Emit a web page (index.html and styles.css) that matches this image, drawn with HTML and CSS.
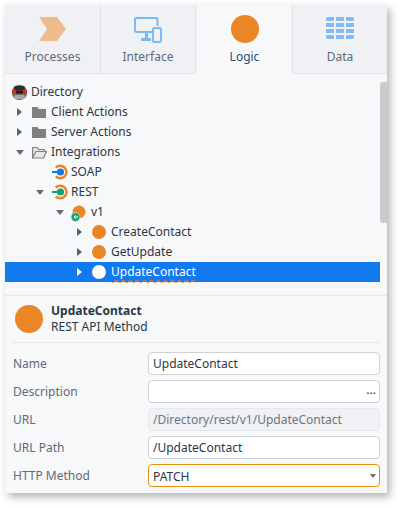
FILE: index.html
```html
<!DOCTYPE html>
<html lang="en">
<head>
<meta charset="utf-8">
<title>Logic</title>
<link rel="stylesheet" href="styles.css">
</head>
<body>
<main class="panel">
  <nav class="tabs">
    <div class="tab">
      <div class="tab-art"><svg class="tab-icon" width="28" height="24" viewBox="0 0 28 24"><path d="M0 0H18L27 12L18 24H0L8 12Z" fill="#eebc8b"/></svg></div>
      <span>Processes</span>
    </div>
    <div class="tab">
      <div class="tab-art"><svg class="tab-icon" width="28" height="26" viewBox="0 0 28 26"><g fill="none" stroke="#7db7f4" stroke-width="2"><path d="M18 15H2.500Q1 15 1 13.500V2.500Q1 1 2.500 1H22Q23.500 1 23.500 2.500V9"/><rect x="19" y="11" width="8" height="14" rx="1.500"/></g><path d="M11 15H14V21H11ZM7 21H17V24H7Z" fill="#7db7f4"/></svg></div>
      <span>Interface</span>
    </div>
    <div class="tab tab-active">
      <div class="tab-art"><span class="dot dot-large"></span></div>
      <span>Logic</span>
    </div>
    <div class="tab tab-last">
      <div class="tab-art"><svg class="tab-icon" width="28" height="22" viewBox="0 0 28 22"><path d="M2 0H8V4H0V2Q0 0 2 0ZM10 0H18V4H10ZM20 0H26Q28 0 28 2V4H20ZM0 6H8V10H0ZM10 6H18V10H10ZM20 6H28V10H20ZM0 12H8V16H0ZM10 12H18V16H10ZM20 12H28V16H20ZM0 18H8V22H2Q0 22 0 20ZM10 18H18V22H10ZM20 18H28V20Q28 22 26 22H20Z" fill="#85bbf2"/></svg></div>
      <span>Data</span>
    </div>
  </nav>

  <section class="tree-area">
    <ul class="tree">
      <li class="row">
        <span class="node"><svg width="17" height="17" viewBox="0 0 17 17"><rect x="1" y="1" width="15" height="15" rx="7" fill="#6a6a6a"/><rect x="3" y="2" width="11" height="4" rx="2" fill="#2e2e2e"/><rect x="1" y="6" width="15" height="4" fill="#c8321e"/><rect x="5" y="6.500" width="7" height="3" fill="#1c1c1c"/><rect x="3" y="11" width="11" height="4" rx="2" fill="#a9a9a9"/></svg></span>
        <span class="label">Directory</span>
      </li>
      <li class="row">
        <span class="twist closed"></span>
        <span class="node node-inset"><svg width="15" height="13" viewBox="0 0 15 13"><path d="M0 1H5.500L7 3H14V12H0Z" fill="#808080"/></svg></span>
        <span class="label">Client Actions</span>
      </li>
      <li class="row">
        <span class="twist closed"></span>
        <span class="node node-inset"><svg width="15" height="13" viewBox="0 0 15 13"><path d="M0 1H5.500L7 3H14V12H0Z" fill="#808080"/></svg></span>
        <span class="label">Server Actions</span>
      </li>
      <li class="row">
        <span class="twist open"></span>
        <span class="node node-inset"><svg width="15" height="13" viewBox="0 0 15 13"><path d="M.6 1.500H5L6.500 3.500H12.500V5.500H4L.6 11.500ZM.6 12H11.500L14.400 5.500H4" fill="#e6e6e6" stroke="#808080" stroke-width="1.200"/></svg></span>
        <span class="label">Integrations</span>
      </li>
      <li class="row level2">
        <span class="twist"></span>
        <span class="node"><svg width="18" height="16" viewBox="0 0 18 16"><path d="M4.800 3.500A6.300 6.300 0 1 1 4.800 12.500" fill="none" stroke="#e98625" stroke-width="2.500"/><path d="M1 8H8" stroke="#1b76d8" stroke-width="2"/><circle cx="9.500" cy="8" r="3.600" fill="#1b76d8"/></svg></span>
        <span class="label">SOAP</span>
      </li>
      <li class="row level2">
        <span class="twist open"></span>
        <span class="node"><svg width="18" height="16" viewBox="0 0 18 16"><path d="M4.800 3.500A6.300 6.300 0 1 1 4.800 12.500" fill="none" stroke="#e98625" stroke-width="2.500"/><path d="M1 8H8" stroke="#16a26c" stroke-width="2"/><circle cx="9.500" cy="8" r="3.600" fill="#16a26c"/></svg></span>
        <span class="label">REST</span>
      </li>
      <li class="row level3">
        <span class="twist open"></span>
        <span class="node"><svg width="18" height="20" viewBox="0 0 18 20"><circle cx="8" cy="10" r="6.500" fill="#e98625"/><circle cx="4.500" cy="15" r="4.500" fill="#16a26c" stroke="#f7f8fa" stroke-width=".6"/><path d="M7 15H3M4.700 13.300L3 15L4.700 16.700" fill="none" stroke="#fff" stroke-width="1"/></svg></span>
        <span class="label">v1</span>
      </li>
      <li class="row level4">
        <span class="twist closed"></span>
        <span class="node node-inset"><span class="dot"></span></span>
        <span class="label">CreateContact</span>
      </li>
      <li class="row level4">
        <span class="twist closed"></span>
        <span class="node node-inset"><span class="dot"></span></span>
        <span class="label">GetUpdate</span>
      </li>
      <li class="row level4 row-selected">
        <span class="twist closed"></span>
        <span class="node node-inset"><span class="dot dot-white"></span></span>
        <span class="label squiggle">UpdateContact</span>
      </li>
    </ul>
    <div class="scrollbar"></div>
  </section>

  <section class="props">
    <header class="props-head">
      <span class="dot dot-large"></span>
      <div class="props-title">
        <strong>UpdateContact</strong>
        <span>REST API Method</span>
      </div>
    </header>
    <form class="form">
      <label class="field-label">Name</label>
      <div class="input">UpdateContact</div>
      <label class="field-label">Description</label>
      <div class="input input-more"><span class="more">...</span></div>
      <label class="field-label">URL</label>
      <div class="input input-readonly">/Directory/rest/v1/UpdateContact</div>
      <label class="field-label">URL Path</label>
      <div class="input">/UpdateContact</div>
      <label class="field-label">HTTP Method</label>
      <div class="input input-focus">PATCH<span class="select-arrow"></span></div>
    </form>
  </section>
</main>
</body>
</html>
```

FILE: styles.css
```css
* {
  box-sizing: border-box;
}

html,
body {
  margin: 0;
  height: 100%;
  background: #fff;
}

body {
  padding: 5px 15px 15px 5px;
  font-family: "Noto Sans", "Open Sans", sans-serif;
  font-size: 12px;
  color: #2b3745;
}

.panel {
  width: 382px;
  height: 488px;
  background: #f7f8fa;
  box-shadow: 3px 4px 8px rgba(0, 0, 0, 0.3);
  display: flex;
  flex-direction: column;
}

.tabs {
  display: grid;
  grid-template-columns: 96px 95px 96px 95px;
  height: 69px;
}

.tab {
  display: flex;
  flex-direction: column;
  align-items: center;
  background: #f0f1f4;
  border-right: 1px solid #e1e3e6;
  border-bottom: 1px solid #e1e3e6;
  color: #5f6a78;
  padding-top: 10px;
  line-height: 17px;
}

.tab-art {
  height: 33px;
}

.tab-icon {
  display: block;
  margin-top: 2px;
}

.tab-active {
  background: #f7f8fa;
  border-right: 0;
  border-bottom: 0;
  padding-left: 1px;
  color: #1f4e79;
}

.tab-last {
  border-right: 0;
  border-left: 1px solid #e1e3e6;
}

.dot {
  display: block;
  width: 14px;
  height: 14px;
  border-radius: 50%;
  background: #ea8626;
}

.dot-large {
  width: 28px;
  height: 28px;
  flex: none;
}

.dot-white {
  background: #fff;
}

.tree-area {
  position: relative;
  height: 222px;
  padding-top: 8px;
  border-bottom: 1px solid #e5e7ea;
}

.tree {
  list-style: none;
  margin: 0;
  padding: 0;
  width: 375px;
}

.row {
  display: flex;
  align-items: center;
  height: 20px;
  padding-left: 6px;
  white-space: nowrap;
}

.label {
  margin-bottom: 2px;
}

.level2 {
  padding-left: 26px;
}

.level3 {
  padding-left: 46px;
}

.level4 {
  padding-left: 66px;
}

.row-selected {
  background: #1379ee;
  color: #fff;
}

.twist {
  width: 20px;
  flex: none;
  display: flex;
  padding-left: 6px;
}

.closed::before {
  content: "";
  border-left: 5px solid #4f6478;
  border-top: 4px solid transparent;
  border-bottom: 4px solid transparent;
}

.open::before {
  content: "";
  margin-left: -1px;
  border-top: 5px solid #666b72;
  border-left: 4px solid transparent;
  border-right: 4px solid transparent;
}

.row-selected .closed::before {
  border-left-color: #fff;
}

.node {
  width: 20px;
  flex: none;
  display: flex;
  align-items: center;
}

.node-inset {
  padding-left: 1px;
}

.node svg {
  display: block;
}

.squiggle {
  text-decoration: underline wavy #e98625 1px;
  text-underline-offset: 3px;
}

.scrollbar {
  position: absolute;
  top: 8px;
  right: 0;
  width: 7px;
  height: 141px;
  background: #c9cbcf;
  border-radius: 3px 0 0 3px;
}

.props {
  flex: 1;
  padding: 0 7px 0 8px;
}

.props-head {
  display: flex;
  align-items: center;
  gap: 8px;
  height: 47px;
  padding-left: 2px;
  border-bottom: 1px solid #e5e7ea;
}

.props-title {
  display: flex;
  flex-direction: column;
  line-height: 16px;
}

.props-title strong {
  font-weight: 700;
}

.form {
  display: grid;
  grid-template-columns: 135px 232px;
  grid-auto-rows: 23px;
  row-gap: 5px;
  align-items: center;
  margin-top: 9px;
}

.field-label {
  color: #5f6a78;
}

.input {
  position: relative;
  height: 23px;
  line-height: 21px;
  padding-left: 4px;
  background: #fff;
  border: 1px solid #cfd2d6;
  border-radius: 4px;
  color: #2b3745;
}

.input-readonly {
  background: #f0f1f4;
  border-color: #e6e7ea;
  color: #6c7683;
}

.input-focus {
  border-color: #e8910f;
  line-height: 23px;
}

.more {
  position: absolute;
  right: 3px;
  top: -1px;
  line-height: 19px;
}

.select-arrow {
  position: absolute;
  right: 3px;
  top: 9px;
  border-top: 4px solid #6a6f76;
  border-left: 3.500px solid transparent;
  border-right: 3.500px solid transparent;
}
```
